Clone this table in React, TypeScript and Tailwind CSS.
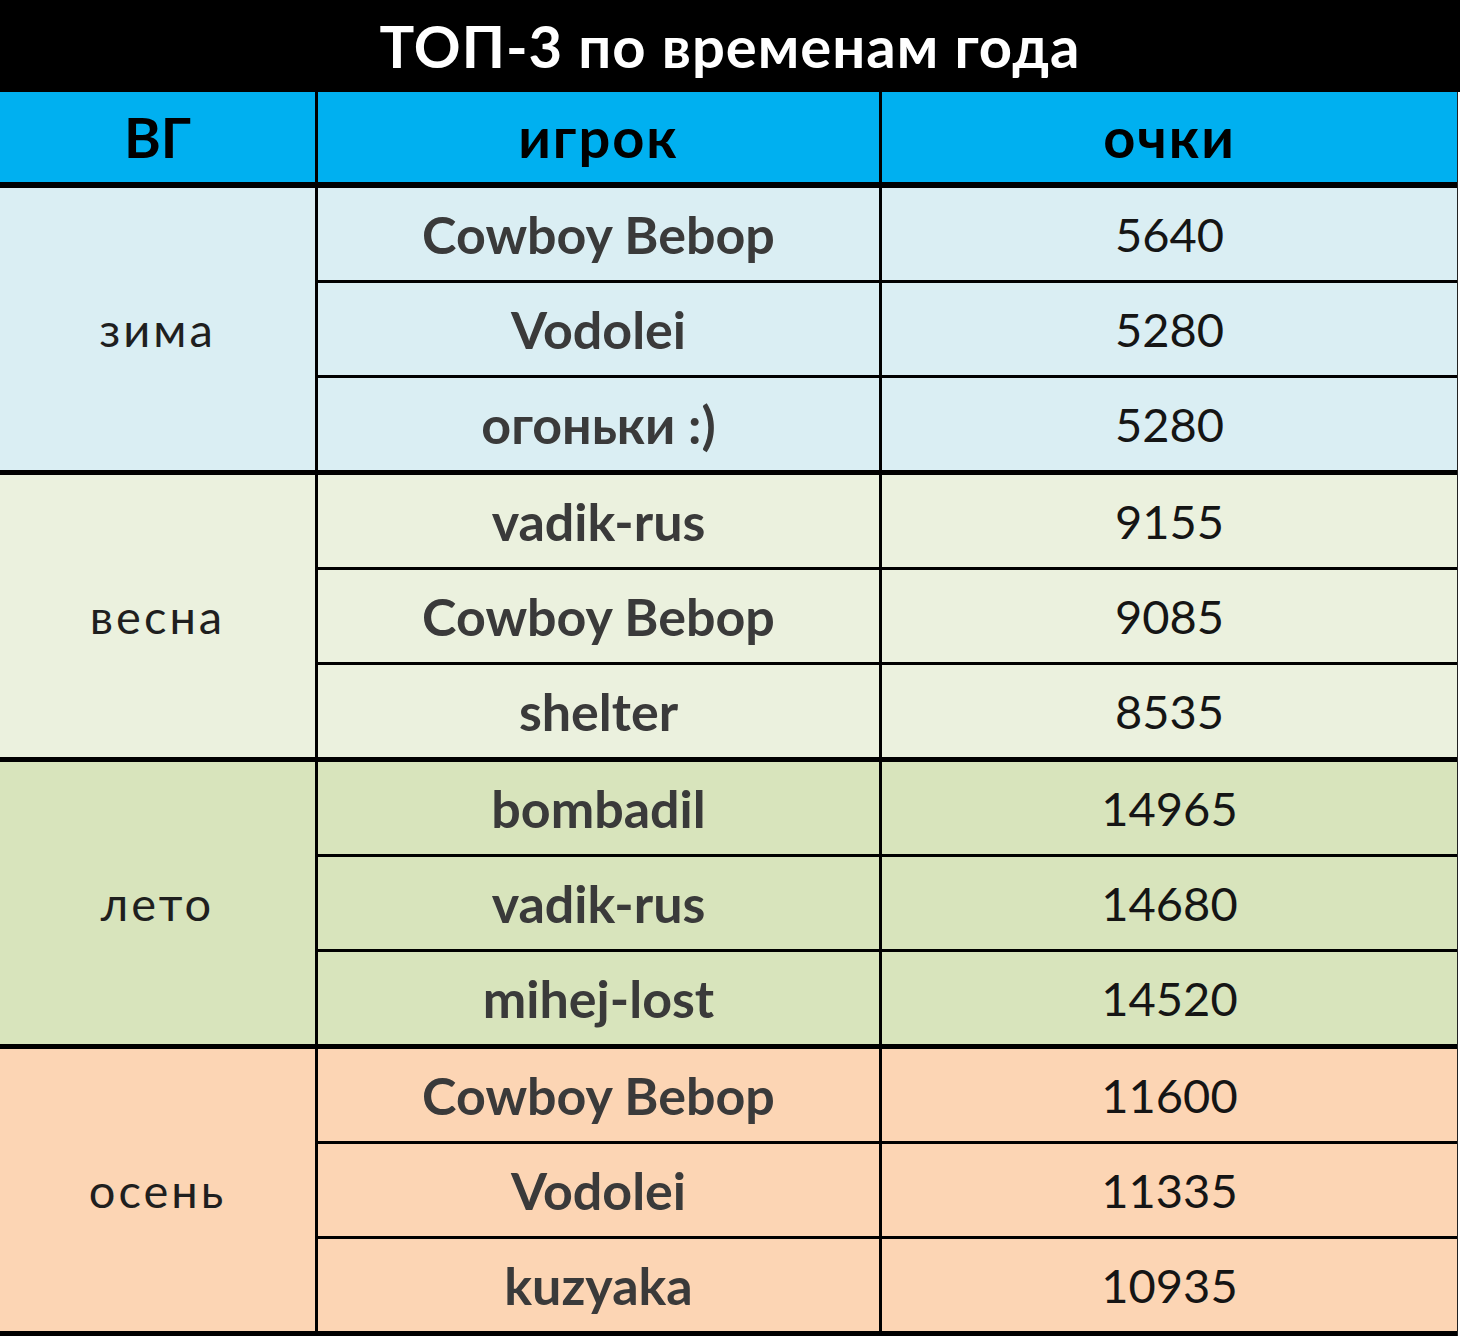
import React from "react";

interface Entry {
  player: string;
  score: string;
}

interface Season {
  name: string;
  bg: string;
  rows: Entry[];
}

const seasons: Season[] = [
  {
    name: "зима",
    bg: "bg-[#daeef3]",
    rows: [
      { player: "Cowboy Bebop", score: "5640" },
      { player: "Vodolei", score: "5280" },
      { player: "огоньки :)", score: "5280" },
    ],
  },
  {
    name: "весна",
    bg: "bg-[#ebf1de]",
    rows: [
      { player: "vadik-rus", score: "9155" },
      { player: "Cowboy Bebop", score: "9085" },
      { player: "shelter", score: "8535" },
    ],
  },
  {
    name: "лето",
    bg: "bg-[#d8e4bc]",
    rows: [
      { player: "bombadil", score: "14965" },
      { player: "vadik-rus", score: "14680" },
      { player: "mihej-lost", score: "14520" },
    ],
  },
  {
    name: "осень",
    bg: "bg-[#fcd5b4]",
    rows: [
      { player: "Cowboy Bebop", score: "11600" },
      { player: "Vodolei", score: "11335" },
      { player: "kuzyaka", score: "10935" },
    ],
  },
];

const SeasonGroup = ({ season }: { season: Season }): React.JSX.Element => {
  return (
    <div className={`flex border-b-[5px] border-black ${season.bg}`}>
      <div className="w-[318px] shrink-0 border-r-[3px] border-black flex items-center justify-center text-[47px] tracking-[3px] text-[#1f1f1f]">
        {season.name}
      </div>
      <div className="flex-1 flex flex-col">
        {season.rows.map((row, i) => (
          <div
            key={i}
            className={
              i === 0 ? "flex h-[92px]" : "flex h-[95px] border-t-[3px] border-black"
            }
          >
            <div className="w-[564px] shrink-0 border-r-[3px] border-black flex items-center justify-center font-bold text-[52px] text-[#3a3a3a]">
              {row.player}
            </div>
            <div className="flex-1 flex items-center justify-center text-[47px] text-[#151515]">
              {row.score}
            </div>
          </div>
        ))}
      </div>
    </div>
  );
};

export default function App(): React.JSX.Element {
  return (
    <div className="w-[1460px] h-[1340px] bg-white font-['Lato',sans-serif] leading-none">
      <div className="h-[92px] bg-black flex items-center justify-center text-white font-bold text-[58px] tracking-[1px]">
        ТОП-3 по временам года
      </div>
      <div className="w-[1458px] border-r border-[#222]">
        <div className="flex h-[96px] bg-[#00b0f0] border-b-[6px] border-black font-bold text-[56px] text-black">
          <div className="w-[318px] shrink-0 border-r-[3px] border-black flex items-center justify-center">
            ВГ
          </div>
          <div className="w-[564px] shrink-0 border-r-[3px] border-black flex items-center justify-center tracking-[2px]">
            игрок
          </div>
          <div className="flex-1 flex items-center justify-center tracking-[2px]">очки</div>
        </div>
        {seasons.map((s) => (
          <SeasonGroup key={s.name} season={s} />
        ))}
      </div>
    </div>
  );
}
